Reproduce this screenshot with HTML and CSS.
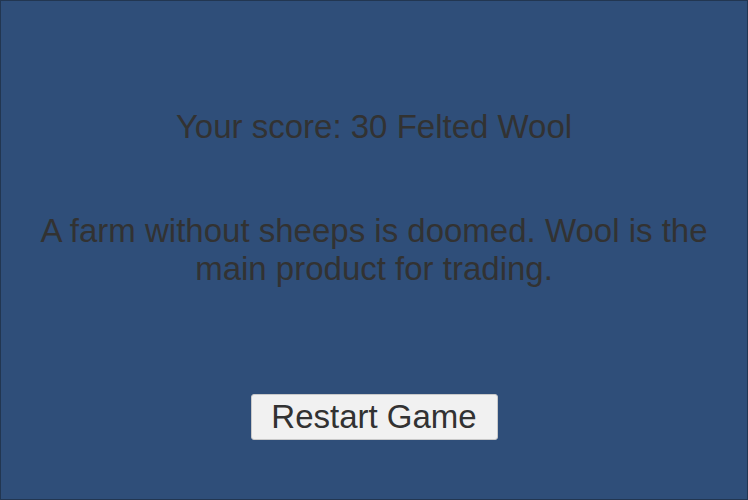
FILE: index.html
```html
<!DOCTYPE html>
<html lang="en">
<head>
<meta charset="utf-8">
<title>Game Over</title>
<link rel="stylesheet" href="styles.css">
</head>
<body>
<main class="screen">
  <h1 class="score">Your score: 30 Felted Wool</h1>
  <p class="fact">A farm without sheeps is doomed. Wool is the main product for trading.</p>
  <button class="restart" type="button">Restart Game</button>
</main>
</body>
</html>
```
FILE: styles.css
```css
html, body {
  margin: 0;
  padding: 0;
  height: 100%;
}

body {
  background: #2f4e79;
  font-family: "Liberation Sans", Arial, sans-serif;
  color: #323232;
}

.screen {
  box-sizing: border-box;
  height: 500px;
  border: 1px solid #223651;
  display: flex;
  flex-direction: column;
  align-items: center;
  padding: 107px 20px 0;
}

.score {
  margin: 0;
  font-size: 33px;
  font-weight: normal;
  line-height: 38px;
}

.fact {
  margin: 66px 0 0;
  width: 700px;
  text-align: center;
  font-size: 33px;
  line-height: 38px;
}

.restart {
  margin-top: 106px;
  width: 247px;
  height: 46px;
  background: #f1f1f1;
  border: 1px solid #c9c9c9;
  border-radius: 3px;
  font-family: inherit;
  font-size: 33px;
  color: #323232;
  padding: 0;
}
```
